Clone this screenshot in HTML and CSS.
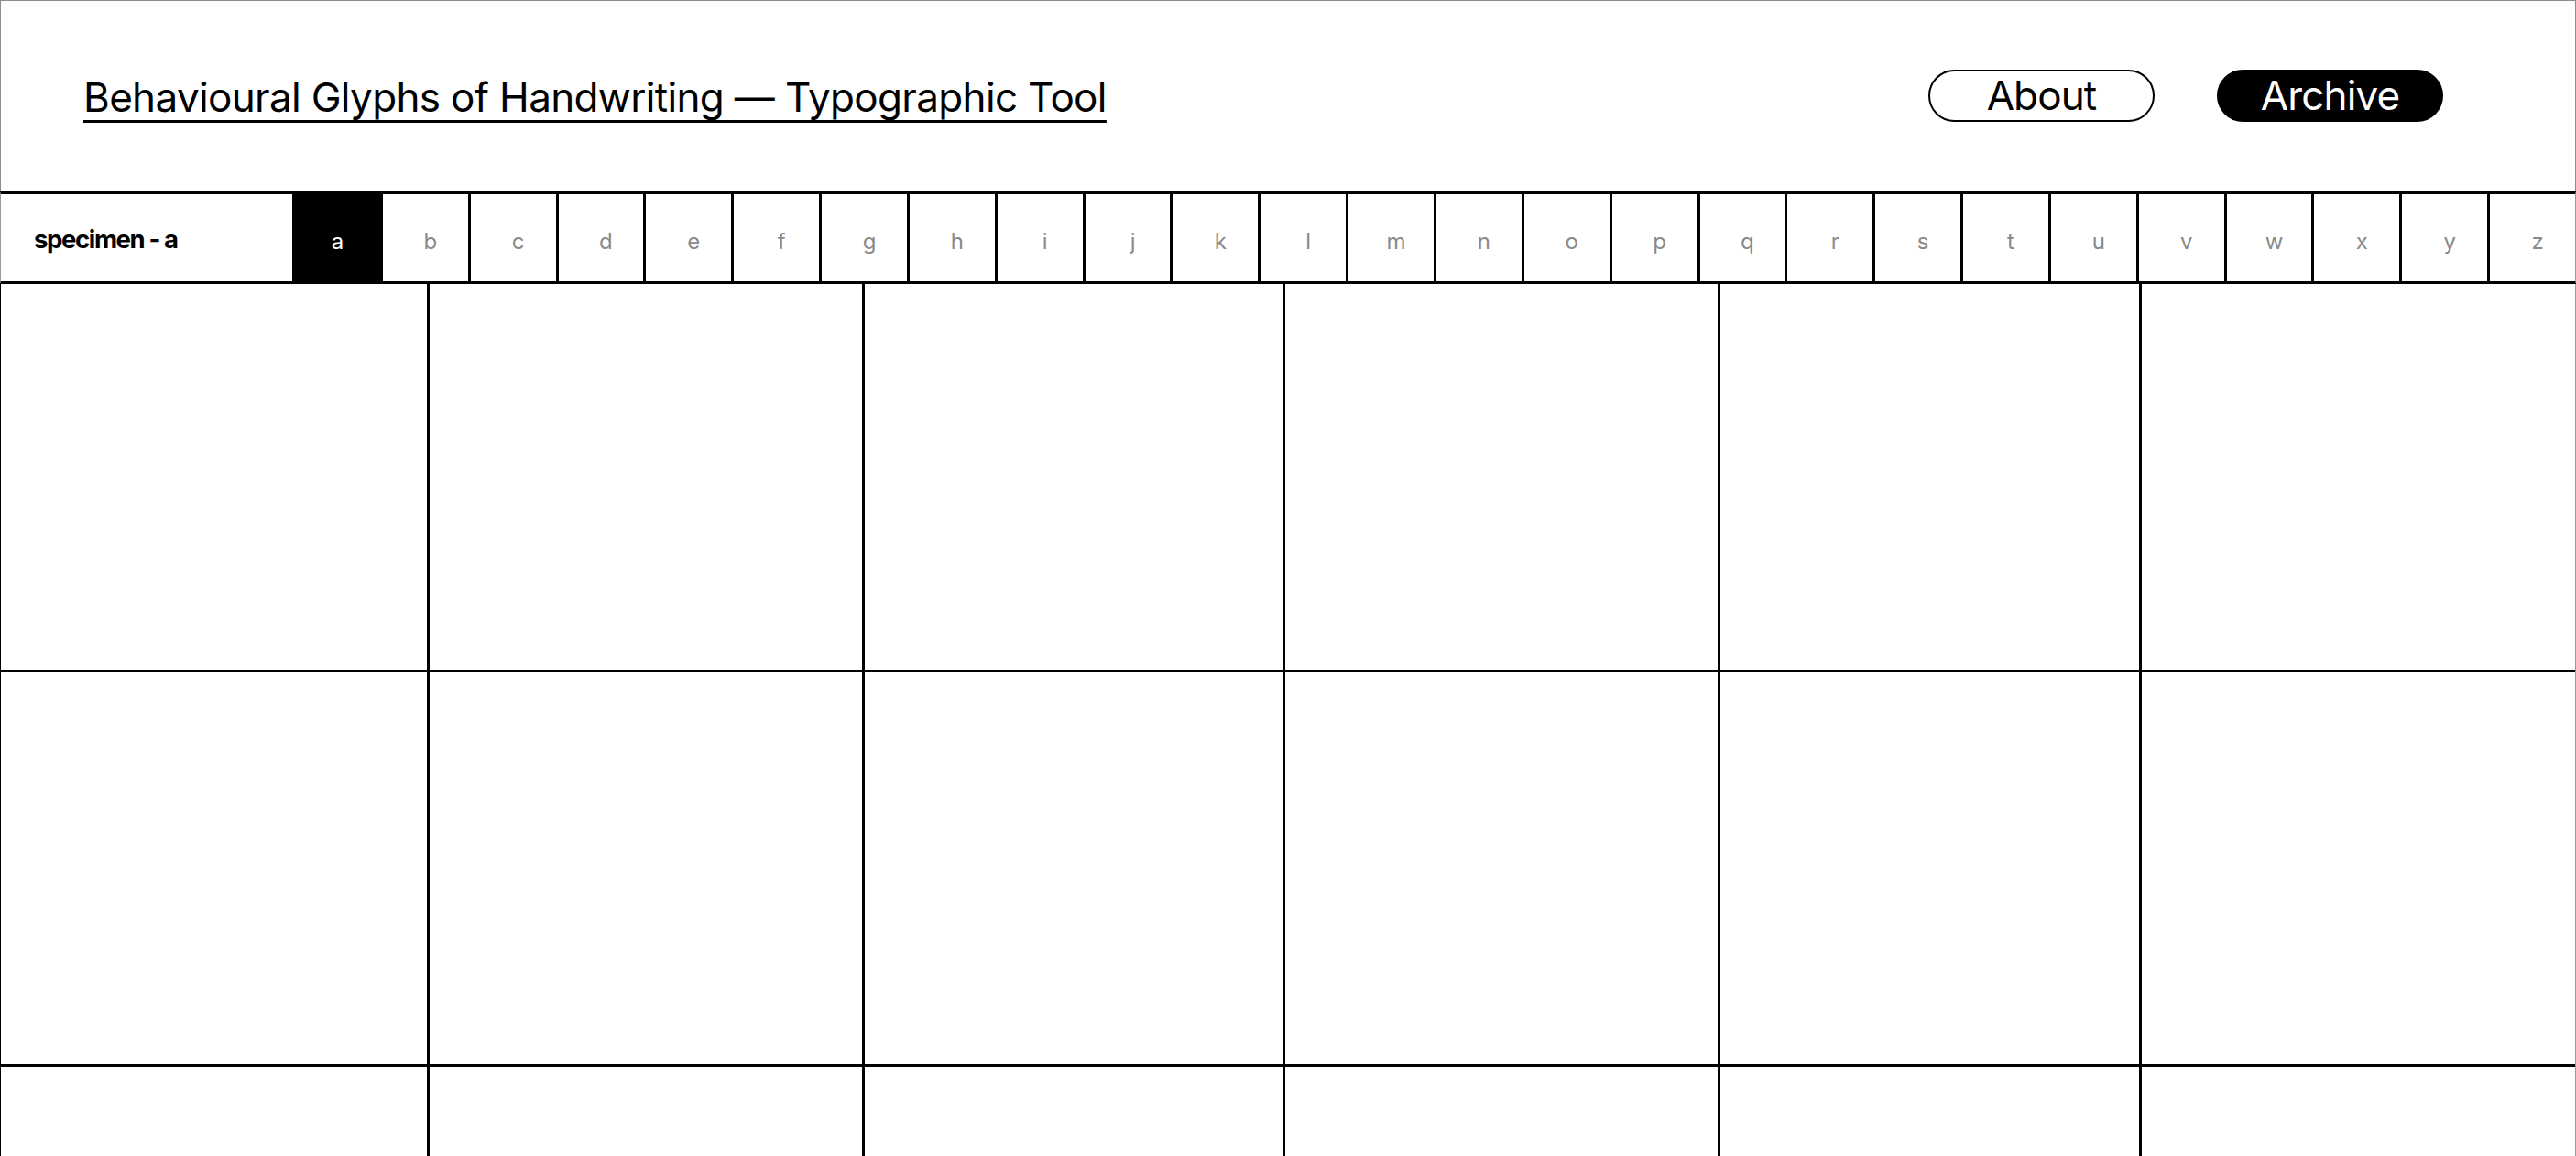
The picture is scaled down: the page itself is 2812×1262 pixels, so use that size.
FILE: index.html
```html
<!DOCTYPE html>
<html lang="en">
<head>
<meta charset="utf-8">
<title>Behavioural Glyphs of Handwriting — Typographic Tool</title>
<link rel="stylesheet" href="styles.css">
</head>
<body>
<div class="page">
  <header class="header">
    <a class="title" href="#">Behavioural Glyphs of Handwriting — Typographic Tool</a>
    <nav class="nav">
      <a class="pill pill-outline" href="#">About</a>
      <a class="pill pill-solid" href="#">Archive</a>
    </nav>
  </header>
  <div class="bar">
    <div class="specimen">specimen - a</div>
    <div class="letters">
      <div class="letter active">a</div>
      <div class="letter">b</div>
      <div class="letter">c</div>
      <div class="letter">d</div>
      <div class="letter">e</div>
      <div class="letter">f</div>
      <div class="letter">g</div>
      <div class="letter">h</div>
      <div class="letter">i</div>
      <div class="letter">j</div>
      <div class="letter">k</div>
      <div class="letter">l</div>
      <div class="letter">m</div>
      <div class="letter">n</div>
      <div class="letter">o</div>
      <div class="letter">p</div>
      <div class="letter">q</div>
      <div class="letter">r</div>
      <div class="letter">s</div>
      <div class="letter">t</div>
      <div class="letter">u</div>
      <div class="letter">v</div>
      <div class="letter">w</div>
      <div class="letter">x</div>
      <div class="letter">y</div>
      <div class="letter">z</div>
    </div>
  </div>
  <main class="grid">
    <div class="cell"></div><div class="cell"></div><div class="cell"></div><div class="cell"></div><div class="cell"></div><div class="cell"></div>
    <div class="cell"></div><div class="cell"></div><div class="cell"></div><div class="cell"></div><div class="cell"></div><div class="cell"></div>
    <div class="cell"></div><div class="cell"></div><div class="cell"></div><div class="cell"></div><div class="cell"></div><div class="cell"></div>
  </main>
</div>
</body>
</html>
```

FILE: styles.css
```css
* { box-sizing: border-box; }

html, body {
  margin: 0;
  padding: 0;
  height: 100%;
  overflow: hidden;
  background: #fff;
}

body {
  font-family: Inter, "Liberation Sans", sans-serif;
  color: #000;
}

.page {
  height: 100vh;
  display: flex;
  flex-direction: column;
  overflow: hidden;
}

.header {
  height: 209px;
  flex: none;
  display: flex;
  align-items: center;
  justify-content: space-between;
  padding: 0 144px 0 90px;
  border: 1px solid #8c8c8c;
  border-bottom-color: #b4b4b4;
}

.title {
  font-size: 44px;
  font-weight: 400;
  letter-spacing: -0.015em;
  color: #000;
  text-decoration: underline;
  text-decoration-thickness: 2.5px;
  text-underline-offset: 9px;
  text-decoration-skip-ink: none;
  line-height: 1;
  margin-top: 2px;
}

.nav {
  display: flex;
  gap: 68px;
  align-items: center;
}

.pill {
  width: 247px;
  height: 57px;
  border-radius: 999px;
  border: 2.5px solid #000;
  display: flex;
  align-items: center;
  justify-content: center;
  font-size: 44px;
  letter-spacing: -0.02em;
  text-decoration: none;
  line-height: 1;
  padding-bottom: 2px;
}

.pill-outline {
  color: #000;
  background: #fff;
}

.pill-solid {
  color: #fff;
  background: #000;
}

.bar {
  flex: none;
  height: 101px;
  display: flex;
  border-top: 3px solid #000;
  border-bottom: 3px solid #000;
  border-left: 1px solid #9a9a9a;
  border-right: 1px solid #9a9a9a;
}

.specimen {
  width: 318px;
  flex: none;
  display: flex;
  align-items: center;
  padding-left: 36px;
  padding-top: 3px;
  font-size: 27.5px;
  font-weight: 700;
  letter-spacing: -0.05em;
}

.letters {
  flex: 1;
  display: grid;
  grid-template-columns: repeat(26, minmax(0, 1fr));
}

.letter {
  border-left: 3px solid #000;
  display: flex;
  align-items: center;
  justify-content: center;
  padding-left: 11px;
  padding-top: 7px;
  font-size: 24px;
  color: #8a8a8a;
}

.letter.active {
  background: #000;
  color: #fff;
  padding-left: 0;
}

.grid {
  flex: 1;
  display: grid;
  grid-template-columns: 468fr 475fr 459fr 475fr 460fr 473fr;
  grid-template-rows: 424px 431px 431px;
  border-left: 1px solid #000;
  border-right: 1px solid #9a9a9a;
  overflow: hidden;
}

.cell {
  border-right: 3px solid #000;
  border-bottom: 3px solid #000;
}

.cell:nth-child(6n) {
  border-right: none;
}
```
